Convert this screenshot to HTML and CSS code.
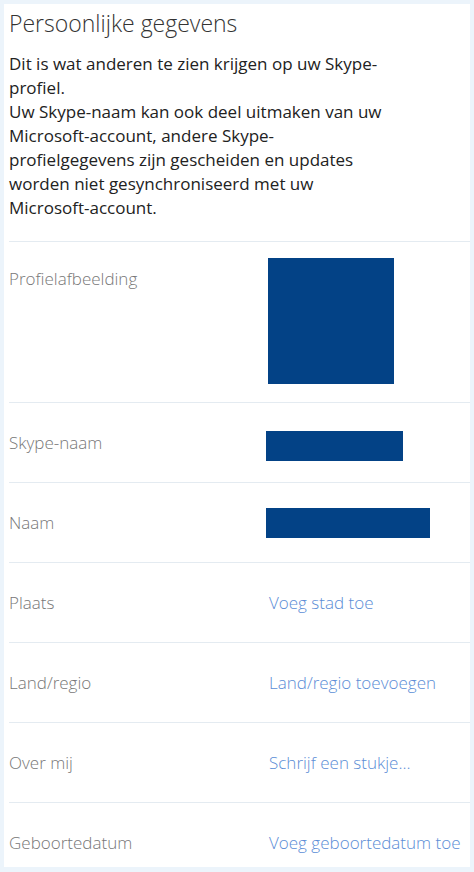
FILE: index.html
```html
<!DOCTYPE html>
<html>
<head>
    <meta charset="utf-8"/>
    <title>Persoonlijke gegevens</title>
    <link rel="stylesheet" href="styles.css">
</head>
<body>
<div class="panel">
    <h1 class="title">Persoonlijke gegevens</h1>
    <p class="intro">
        Dit is wat anderen te zien krijgen op uw Skype-<br>
        profiel.<br>
        Uw Skype-naam kan ook deel uitmaken van uw<br>
        Microsoft-account, andere Skype-<br>
        profielgegevens zijn gescheiden en updates<br>
        worden niet gesynchroniseerd met uw<br>
        Microsoft-account.
    </p>
    <ul class="rows">
        <li class="row row-pic">
            <span class="label">Profielafbeelding</span>
            <span class="value"><span class="avatar"></span></span>
        </li>
        <li class="row">
            <span class="label">Skype-naam</span>
            <span class="value"><span class="mask mask-skype"></span></span>
        </li>
        <li class="row">
            <span class="label">Naam</span>
            <span class="value"><span class="mask mask-name"></span></span>
        </li>
        <li class="row">
            <span class="label">Plaats</span>
            <span class="value"><a href="#">Voeg stad toe</a></span>
        </li>
        <li class="row">
            <span class="label">Land/regio</span>
            <span class="value"><a href="#">Land/regio toevoegen</a></span>
        </li>
        <li class="row">
            <span class="label">Over mij</span>
            <span class="value"><a href="#">Schrijf een stukje...</a></span>
        </li>
        <li class="row">
            <span class="label">Geboortedatum</span>
            <span class="value"><a href="#">Voeg geboortedatum toe</a></span>
        </li>
    </ul>
</div>
</body>
</html>
```

FILE: styles.css
```css
* {
    margin: 0;
    padding: 0;
}
html, body {
    height: 100%;
}
body {
    font: 17px/24px "Open Sans", "Liberation Sans", sans-serif;
    color: #222;
    background: #ecf4fb;
    padding: 4px;
    box-sizing: border-box;
    overflow: hidden;
}
li {
    list-style: none;
}
a {
    color: #5b8dd6;
    text-decoration: none;
}
a:hover {
    text-decoration: underline;
}
.panel {
    background: #fff;
    width: 466px;
    height: 863px;
    padding-left: 5px;
    box-sizing: border-box;
    overflow: hidden;
}
.title {
    font-size: 23px;
    font-weight: 300;
    line-height: 32px;
    padding-top: 3px;
    color: #333;
}
.intro {
    margin-top: 13px;
    height: 189px;
}
.row {
    display: grid;
    grid-template-columns: 257px 1fr;
    align-items: center;
    height: 80px;
    box-sizing: border-box;
    border-top: 1px solid #e4ebf1;
    font-weight: 300;
    white-space: nowrap;
}
.label {
    color: #777;
}
.row-pic {
    height: 161px;
    align-items: start;
    padding-top: 16px;
}
.row-pic .label {
    padding-top: 9px;
}
.avatar {
    display: block;
    width: 126px;
    height: 126px;
    margin-left: 2px;
    background: #034286;
}
.mask {
    display: block;
    height: 30px;
    margin-top: 6px;
    background: #034286;
}
.mask-skype {
    width: 137px;
}
.mask-name {
    width: 164px;
    margin-top: 0;
}
.value a {
    margin-left: 3px;
}
```
